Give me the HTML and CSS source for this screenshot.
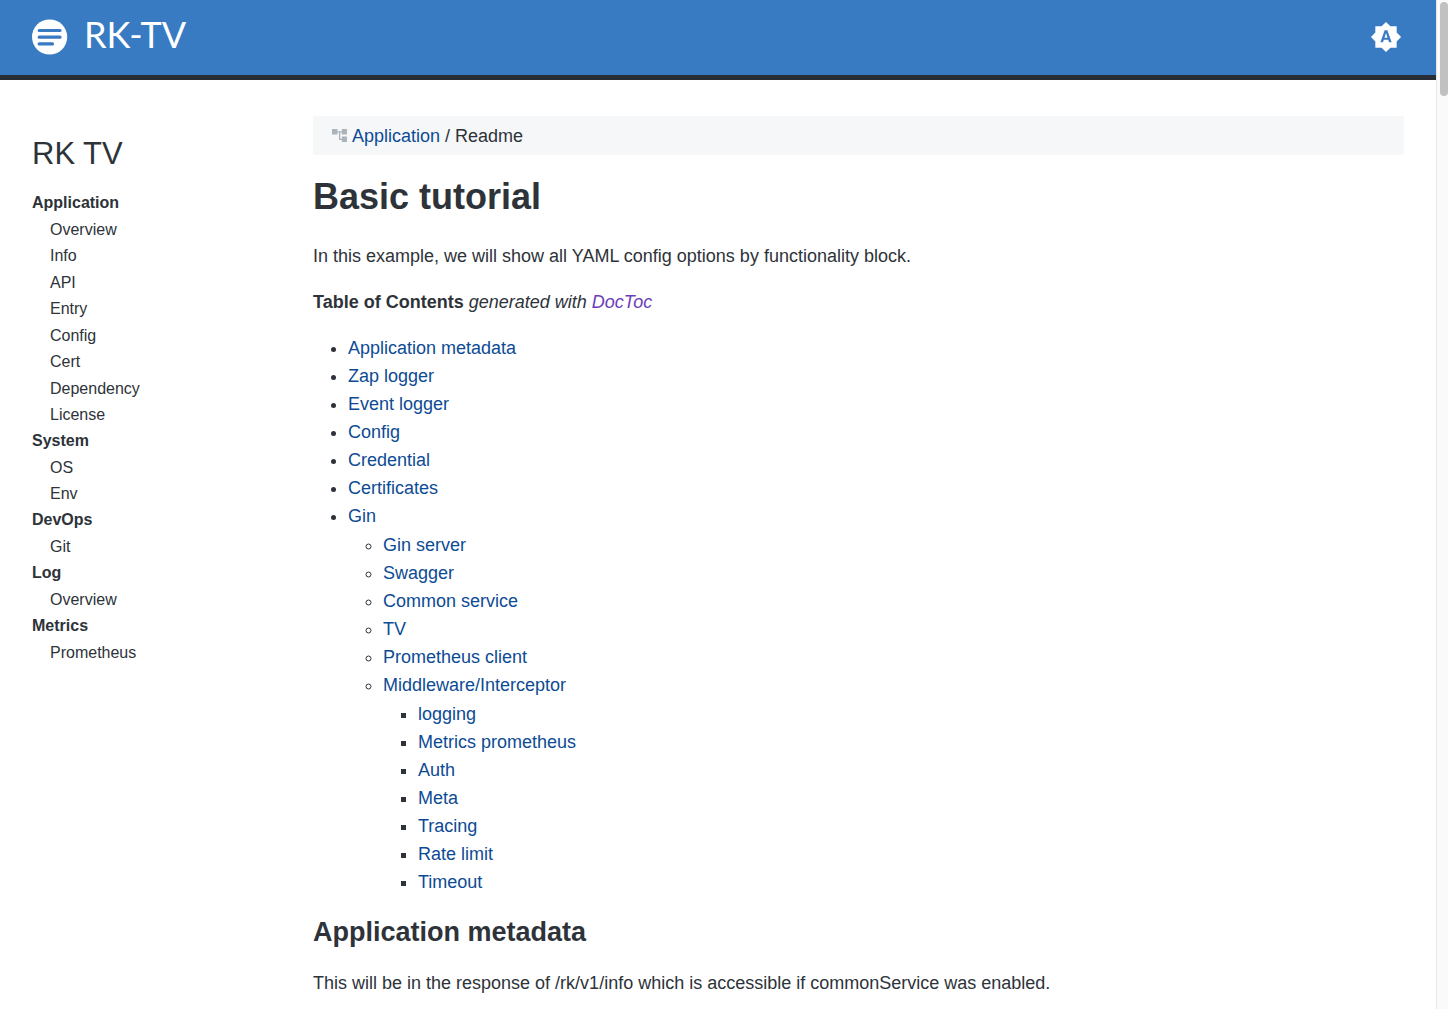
FILE: index.html
```html
<!DOCTYPE html>
<html lang="en">
<head>
<meta charset="utf-8">
<meta name="viewport" content="width=device-width, initial-scale=1">
<title>RK-TV</title>
<link rel="stylesheet" href="styles.css">
</head>
<body>
<div class="app">
  <div class="page">
    <header class="topbar">
      <a class="brand" href="#">
        <svg class="brand-icon" viewBox="0 0 36 36" aria-hidden="true">
          <circle cx="17.6" cy="18" r="17.6" fill="#fff"/>
          <path d="M7.2 11.5H28M7.2 18.2H28M7.2 24.9H20.5" stroke="#387bc2" stroke-width="3.2" stroke-linecap="round"/>
        </svg>
        <span class="brand-name">RK-TV</span>
      </a>
      <button class="theme-button" type="button" aria-label="Theme">
        <svg class="theme-icon" viewBox="0 0 24 24" aria-hidden="true">
          <path fill="#fff" d="M10.85 12.65h2.3L12 9l-1.15 3.65zM20 8.69V4h-4.69L12 .69 8.69 4H4v4.69L.69 12 4 15.31V20h4.69L12 23.31 15.31 20H20v-4.69L23.31 12 20 8.69zM14.3 16l-.7-2h-3.2l-.7 2H7.8L11 7h2l3.2 9h-1.9z"/>
        </svg>
      </button>
    </header>
    <div class="columns">
      <nav class="sidebar" aria-label="Sections">
        <h2 class="sidebar-title">RK TV</h2>
        <h3 class="group-title">Application</h3>
        <ul class="group">
          <li><a href="#">Overview</a></li>
          <li><a href="#">Info</a></li>
          <li><a href="#">API</a></li>
          <li><a href="#">Entry</a></li>
          <li><a href="#">Config</a></li>
          <li><a href="#">Cert</a></li>
          <li><a href="#">Dependency</a></li>
          <li><a href="#">License</a></li>
        </ul>
        <h3 class="group-title">System</h3>
        <ul class="group">
          <li><a href="#">OS</a></li>
          <li><a href="#">Env</a></li>
        </ul>
        <h3 class="group-title">DevOps</h3>
        <ul class="group">
          <li><a href="#">Git</a></li>
        </ul>
        <h3 class="group-title">Log</h3>
        <ul class="group">
          <li><a href="#">Overview</a></li>
        </ul>
        <h3 class="group-title">Metrics</h3>
        <ul class="group">
          <li><a href="#">Prometheus</a></li>
        </ul>
      </nav>
      <main class="content">
        <nav class="breadcrumb" aria-label="Breadcrumb">
          <svg class="tree-icon" viewBox="0 0 16 14" aria-hidden="true">
            <path fill="#acb4bb" d="M0 0h5.4v5.6H0zM9.8 0H15v5.6H9.8zM9.8 7.4H15V13H9.8z"/>
            <path fill="none" stroke="#acb4bb" stroke-width="1.3" d="M5 2.9h5M7.6 2.9v7.5h2.6"/>
          </svg>
          <span><a href="#">Application</a> / Readme</span>
        </nav>
        <h1>Basic tutorial</h1>
        <p>In this example, we will show all YAML config options by functionality block.</p>
        <p><strong>Table of Contents</strong> <em>generated with <a class="visited" href="#">DocToc</a></em></p>
        <ul class="toc">
          <li><a href="#">Application metadata</a></li>
          <li><a href="#">Zap logger</a></li>
          <li><a href="#">Event logger</a></li>
          <li><a href="#">Config</a></li>
          <li><a href="#">Credential</a></li>
          <li><a href="#">Certificates</a></li>
          <li><a href="#">Gin</a>
            <ul>
              <li><a href="#">Gin server</a></li>
              <li><a href="#">Swagger</a></li>
              <li><a href="#">Common service</a></li>
              <li><a href="#">TV</a></li>
              <li><a href="#">Prometheus client</a></li>
              <li><a href="#">Middleware/Interceptor</a>
                <ul>
                  <li><a href="#">logging</a></li>
                  <li><a href="#">Metrics prometheus</a></li>
                  <li><a href="#">Auth</a></li>
                  <li><a href="#">Meta</a></li>
                  <li><a href="#">Tracing</a></li>
                  <li><a href="#">Rate limit</a></li>
                  <li><a href="#">Timeout</a></li>
                </ul>
              </li>
            </ul>
          </li>
        </ul>
        <h2>Application metadata</h2>
        <p>This will be in the response of /rk/v1/info which is accessible if commonService was enabled.</p>
      </main>
    </div>
  </div>
  <div class="scroll-track" aria-hidden="true"><div class="scroll-thumb"></div></div>
</div>
</body>
</html>
```
FILE: styles.css
```css
* {
  box-sizing: border-box;
}

body {
  margin: 0;
  background: #fff;
  color: #2d3339;
  font: 18px/28px "Liberation Sans", Arial, sans-serif;
}

a {
  color: #0d4b94;
  text-decoration: none;
}

.app {
  display: flex;
  height: 100vh;
  overflow: hidden;
}

.page {
  flex: 1;
  min-width: 0;
}

.topbar {
  display: flex;
  align-items: center;
  justify-content: space-between;
  height: 80px;
  padding: 0 34px 2px 32px;
  background: #387bc2;
  border-bottom: 5px solid #282d36;
}

.brand {
  display: flex;
  align-items: center;
  gap: 16px;
  color: #fff;
}

.brand-icon {
  width: 36px;
  height: 36px;
}

.brand-name {
  padding-bottom: 6px;
  font: 400 36px/40px Lato, sans-serif;
}

.theme-button {
  display: flex;
  padding: 0;
  border: 0;
  background: none;
}

.theme-icon {
  width: 32px;
  height: 32px;
}

.columns {
  display: grid;
  grid-template-columns: 249px minmax(0, 1fr);
  gap: 32px;
  padding: 36px 32px;
}

.sidebar {
  padding-top: 18px;
  font-size: 16px;
  line-height: 26px;
}

.sidebar-title {
  margin: 0 0 16px;
  font-size: 31px;
  font-weight: 400;
  line-height: 40px;
}

.group-title {
  margin: 0;
  font-size: 16px;
  line-height: 26px;
}

.group {
  margin: 0;
  padding: 0 0 0 18px;
  list-style: none;
}

.group li:nth-child(odd) {
  margin-top: 1px;
}

.group a {
  color: #2d3339;
}

.breadcrumb {
  display: flex;
  align-items: center;
  gap: 4px;
  height: 39px;
  padding: 0 19px;
  border-radius: 3px;
  background: #f6f7f9;
}

.tree-icon {
  width: 16px;
  height: 14px;
}

h1 {
  margin: 20px 0 23px;
  font-size: 36px;
  line-height: 44px;
}

.content p {
  margin: 0 0 18px;
}

.content .visited {
  color: #6b3db8;
}

.toc,
.toc ul {
  margin: 0;
  padding-left: 35px;
}

.toc ul {
  padding-top: 1px;
}

.content h2 {
  margin: 20px 0 21px;
  font-size: 27px;
  line-height: 32px;
}

.scroll-track {
  width: 12px;
  padding: 2px 0 0 3px;
  border-left: 1px solid #e8e8e8;
  background: #fafafa;
}

.scroll-thumb {
  height: 94px;
  border-radius: 4px;
  background: #c1c1c1;
}
```
